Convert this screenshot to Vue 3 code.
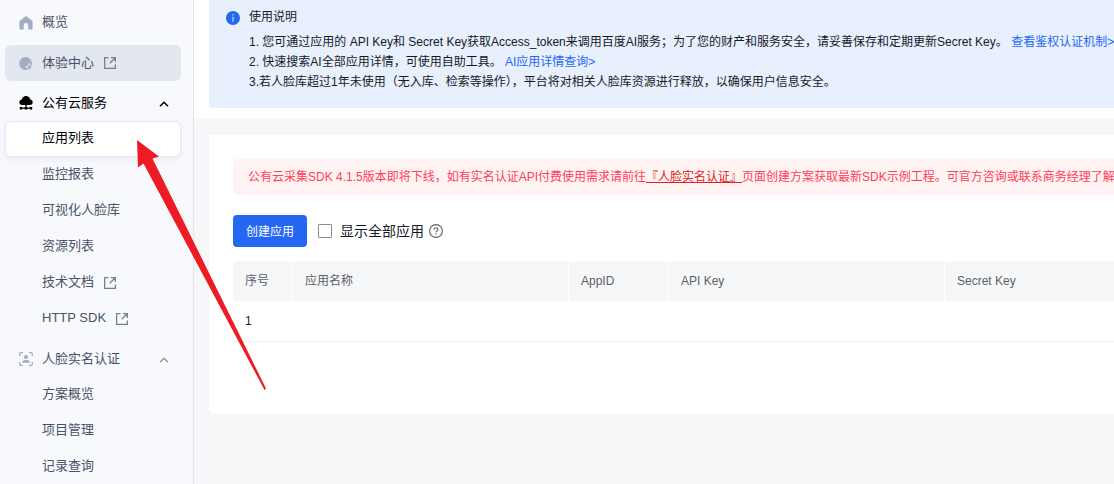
<script setup>
import { ref } from 'vue'

const active = ref('应用列表')
const showAll = ref(false)

const publicItems = [
  { name: '应用列表' },
  { name: '监控报表' },
  { name: '可视化人脸库' },
  { name: '资源列表' },
  { name: '技术文档', external: true },
  { name: 'HTTP SDK', external: true }
]

const authItems = [
  { name: '方案概览' },
  { name: '项目管理' },
  { name: '记录查询' }
]

const columns = ['序号', '应用名称', 'AppID', 'API Key', 'Secret Key']
</script>

<template>
  <div class="page">
    <aside class="sidebar">
      <div class="menu-item">
        <svg class="icon" viewBox="0 0 14 14">
          <path d="M6 .7a1.600 1.600 0 0 1 2 0l5 3.900c.4.3.6.8.6 1.300v6.300c0 .8-.6 1.400-1.400 1.400H9.300V9.400a2.300 2.300 0 0 0-4.600 0v4.200H1.800c-.8 0-1.400-.6-1.400-1.400V5.900c0-.5.2-1 .6-1.300z" fill="#a2acc2" />
        </svg>
        <span>概览</span>
      </div>
      <div class="menu-item hovered">
        <svg class="icon" viewBox="0 0 14 14">
          <circle cx="6.600" cy="6.500" r="6.400" fill="#a2acc2" />
          <path d="M10.300 6.200l1.200 2.700 2.500 1.200-2.500 1.200-1.200 2.700-1.200-2.700-2.500-1.200 2.500-1.200z" fill="#a2acc2" stroke="#e3e8f0" stroke-width="1" />
        </svg>
        <span>体验中心</span>
        <svg class="external" viewBox="0 0 12 12">
          <path d="M4.500.6H.6v10.800h10.800V7.500M7 .6h4.400V5M11.200.8 5.800 6.200" />
        </svg>
      </div>
      <div class="menu-item group dark">
        <svg class="icon" viewBox="0 0 14 14">
          <circle cx="7" cy="4.200" r="4.200" fill="#000" />
          <rect x=".4" y="3.600" width="13.200" height="5.400" rx="2.700" fill="#000" />
          <path d="M7 8.500v4M1.500 12.200h11" fill="none" stroke="#000" stroke-width="1.300" />
          <path d="M.8 12.200h2.400M5.700 12.200h2.600M10.800 12.200h2.400" fill="none" stroke="#000" stroke-width="2.400" />
        </svg>
        <span>公有云服务</span>
        <svg class="caret" viewBox="0 0 10 6"><path d="M1 5.300 5 1.300 9 5.300" /></svg>
      </div>
      <div
        v-for="item in publicItems"
        :key="item.name"
        class="menu-item sub"
        :class="{ active: active === item.name }"
        @click="active = item.name"
      >
        <span>{{ item.name }}</span>
        <svg v-if="item.external" class="external" viewBox="0 0 12 12">
          <path d="M4.500.6H.6v10.800h10.800V7.500M7 .6h4.400V5M11.200.8 5.800 6.200" />
        </svg>
      </div>
      <div class="menu-item group">
        <svg class="icon" viewBox="0 0 14 14">
          <path d="M.7 4V2C.7 1.200 1.200.7 2 .7h2M10 .7h2c.8 0 1.300.5 1.300 1.300v2M13.300 10v2c0 .8-.5 1.300-1.300 1.300h-2M4 13.300H2c-.8 0-1.300-.5-1.300-1.300v-2" fill="none" stroke="#a2acc2" stroke-width="1.300" />
          <circle cx="7" cy="5" r="2.100" fill="#a2acc2" />
          <path d="M3.200 10.700c0-3.800 7.600-3.800 7.600 0z" fill="#a2acc2" />
        </svg>
        <span>人脸实名认证</span>
        <svg class="caret" viewBox="0 0 10 6"><path d="M1 5.300 5 1.300 9 5.300" /></svg>
      </div>
      <div
        v-for="item in authItems"
        :key="item.name"
        class="menu-item sub"
        :class="{ active: active === item.name }"
        @click="active = item.name"
      >
        <span>{{ item.name }}</span>
      </div>
    </aside>

    <main class="main">
      <section class="notice">
        <div class="notice-box">
          <svg class="info" viewBox="0 0 14 14">
            <circle cx="7" cy="7" r="7" fill="#2468f2" />
            <path d="M7 3.200v1.300M7 5.800v5" stroke="#dce8fd" stroke-width="1.100" />
          </svg>
          <div class="notice-body">
            <div class="notice-title">使用说明</div>
            <p>1. 您可通过应用的 API Key和 Secret Key获取Access_token来调用百度AI服务；为了您的财产和服务安全，请妥善保存和定期更新Secret Key。 <a href="#" @click.prevent>查看鉴权认证机制&gt;</a></p>
            <p>2. 快速搜索AI全部应用详情，可使用自助工具。 <a href="#" @click.prevent>AI应用详情查询&gt;</a></p>
            <p>3.若人脸库超过1年未使用（无入库、检索等操作），平台将对相关人脸库资源进行释放，以确保用户信息安全。</p>
          </div>
        </div>
      </section>

      <section class="card">
        <div class="alert">
          公有云采集SDK 4.1.5版本即将下线，如有实名认证API付费使用需求请前往<a href="#" @click.prevent>『人脸实名认证』</a>页面创建方案获取最新SDK示例工程。可官方咨询或联系商务经理了解
        </div>
        <div class="toolbar">
          <button class="create">创建应用</button>
          <label class="show-all">
            <input v-model="showAll" type="checkbox" />
            <span>显示全部应用</span>
          </label>
          <svg class="help" viewBox="0 0 14 14">
            <circle cx="7" cy="7" r="6.400" />
            <path d="M5.100 5.600c0-2.500 3.800-2.500 3.800 0C8.900 6.900 7 6.900 7 8.500M7 9.600v1.200" />
          </svg>
        </div>
        <div class="table">
          <div class="row head">
            <div v-for="col in columns" :key="col" class="cell">{{ col }}</div>
          </div>
          <div class="row">
            <div class="cell">1</div>
          </div>
        </div>
      </section>
    </main>

    <svg class="arrow" viewBox="0 0 132 252">
      <path d="M1 1 23 17.500 16.500 19.500 130 249.500 128.500 251 7.500 24.500 2 28.500z" fill="#ed1c24" />
    </svg>
  </div>
</template>

<style>
body {
  margin: 0;
  overflow: hidden;
}
</style>

<style scoped>
.page {
  position: relative;
  display: flex;
  width: 100%;
  height: 484px;
  overflow: hidden;
  background: #f6f7f9;
  font-family: "Liberation Sans", "Noto Sans CJK SC", sans-serif;
  font-size: 12px;
  color: #151b26;
}

.sidebar {
  box-sizing: border-box;
  flex: 0 0 194px;
  padding: 4px 12px 0 5px;
  background: #f8f9fd;
  border-right: 1px solid #e2e4e9;
  color: #4a5366;
}

.menu-item {
  box-sizing: border-box;
  display: flex;
  align-items: center;
  height: 36px;
  padding: 0 12px 0 14px;
  border-radius: 6px;
  font-size: 13px;
  line-height: 20px;
  white-space: nowrap;
  cursor: pointer;
}

.hovered {
  margin-top: 5px;
  background: #e3e8f0;
}

.icon {
  width: 14px;
  height: 14px;
  margin: 1px 9px 0 0;
}

.group {
  margin-top: 4px;
  padding-bottom: 1px;
}

.dark {
  color: #000;
}

.sub {
  padding: 0 0 2px 37px;
}

.sub.active {
  padding: 0 0 2px 36px;
  background: #fff;
  border: 1px solid #e4e8f0;
  box-shadow: 0 2px 6px rgba(40, 60, 110, 0.07);
  color: #000;
}

.external {
  width: 12px;
  height: 12px;
  margin-left: 10px;
  fill: none;
  stroke: #767e8f;
  stroke-width: 1.3;
}

.sub .external {
  margin-top: 1px;
}

.caret {
  width: 10px;
  height: 6px;
  margin: 3px 0 0 auto;
  fill: none;
  stroke: #999;
  stroke-width: 1.6;
}

.dark .caret {
  stroke: #000;
}

.main {
  flex: 1;
  min-width: 0;
  white-space: nowrap;
}

.notice {
  padding: 0 0 11px 15px;
  background: #fff;
}

.notice-box {
  box-sizing: border-box;
  display: flex;
  height: 108px;
  padding: 7px 0 0 17px;
  background: #e8effd;
  border-radius: 0 0 0 4px;
}

.info {
  flex: none;
  width: 14px;
  height: 14px;
  margin: 4px 9px 0 0;
}

.notice-title {
  margin-bottom: 5px;
  line-height: 20px;
}

.notice-body p {
  margin: 0;
  line-height: 20px;
}

.notice-body a {
  color: #2468f2;
  text-decoration: none;
}

.card {
  box-sizing: border-box;
  height: 279px;
  margin: 16px 0 0 15px;
  padding: 24px 0 0 24px;
  background: #fff;
  border-radius: 0 0 0 6px;
}

.alert {
  height: 36px;
  padding-left: 15px;
  overflow: hidden;
  background: #fff4f3;
  border-radius: 4px 0 0 4px;
  color: #ff3d55;
  line-height: 37px;
}

.alert a {
  color: #e02020;
  text-decoration: underline;
}

.toolbar {
  display: flex;
  align-items: center;
  height: 32px;
  margin: 20px 0 14px;
}

.create {
  width: 74px;
  height: 32px;
  padding: 0 0 2px;
  background: #2468f2;
  border: none;
  border-radius: 4px;
  color: #fff;
  font-family: inherit;
  font-size: 12px;
  cursor: pointer;
}

.show-all {
  display: flex;
  align-items: center;
  margin-left: 11px;
  font-size: 14px;
}

.show-all span {
  margin-top: -2px;
}

.show-all input {
  appearance: none;
  box-sizing: border-box;
  width: 14px;
  height: 14px;
  margin: 0 8px 0 0;
  background: #fff;
  border: 1px solid #848b99;
  border-radius: 1px;
}

.help {
  width: 14px;
  height: 14px;
  margin-left: 5px;
  fill: none;
  stroke: #5c5f66;
  stroke-width: 1.1;
}

.row {
  display: grid;
  grid-template-columns: 60px 276px 100px 276px 1fr;
  height: 40px;
  border-bottom: 1px solid #eeeff2;
  line-height: 40px;
}

.row.head {
  overflow: hidden;
  background: #f6f7f9;
  border-bottom: none;
  border-radius: 4px 0 0 0;
  color: #5c5f66;
}

.cell {
  box-sizing: border-box;
  padding-left: 12px;
}

.head .cell:not(:last-child) {
  border-right: 1px solid #fff;
}

.arrow {
  position: absolute;
  left: 136px;
  top: 139px;
  width: 132px;
  height: 252px;
  pointer-events: none;
}
</style>
